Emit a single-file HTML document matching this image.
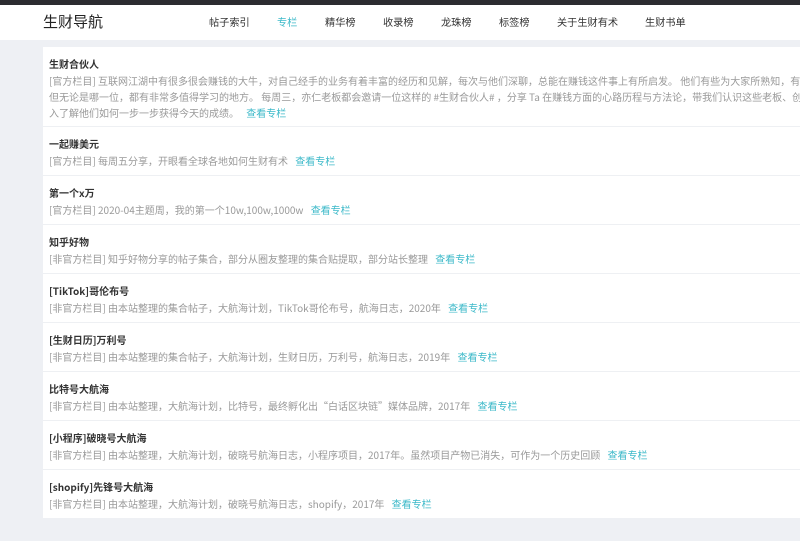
<!DOCTYPE html>
<html><head><meta charset="utf-8"><style>
*{margin:0;padding:0;box-sizing:border-box}
body{width:800px;height:541px;overflow:hidden;background:#eef0f4;font-family:"Noto Sans CJK SC","Liberation Sans",sans-serif;position:relative}
.top{position:absolute;left:0;top:0;width:800px;height:5px;background:#2c2c30}
.nav{position:absolute;left:0;top:5px;width:800px;height:35px;background:#fff}
.logo{position:absolute;left:43px;top:7px;font-size:15px;color:#222;line-height:20px}
.nav a{position:absolute;top:9px;font-size:10.2px;color:#333;line-height:16px;white-space:nowrap}
.nav a.on{color:#3cb9c9}
.card{position:absolute;left:43px;top:47px;width:757px;height:471px;background:#fff;overflow:hidden}
.it{height:49px;border-bottom:1px solid #eef0f3;padding:8px 6px 0;white-space:nowrap}
.it.first{height:80px}
.t{font-size:10px;font-weight:bold;color:#333;line-height:17px}
.d{font-size:10px;color:#999;line-height:16px;margin-top:1px}
.d a{color:#3cb9c9;margin-left:5px}
</style></head><body>
<div class="top"></div>
<div class="nav">
<div class="logo">生财导航</div>
<a style="left:209px">帖子索引</a>
<a class="on" style="left:277px">专栏</a>
<a style="left:325px">精华榜</a>
<a style="left:383px">收录榜</a>
<a style="left:441px">龙珠榜</a>
<a style="left:499px">标签榜</a>
<a style="left:557px">关于生财有术</a>
<a style="left:645px">生财书单</a>
</div>
<div class="card">
<div class="it first"><div class="t">生财合伙人</div><div class="d">[官方栏目] 互联网江湖中有很多很会赚钱的大牛，对自己经手的业务有着丰富的经历和见解，每次与他们深聊，总能在赚钱这件事上有所启发。 他们有些为大家所熟知，有些<br>但无论是哪一位，都有非常多值得学习的地方。 每周三，亦仁老板都会邀请一位这样的 #生财合伙人# ，分享 Ta 在赚钱方面的心路历程与方法论，带我们认识这些老板、创<br>入了解他们如何一步一步获得今天的成绩。 <a>查看专栏</a></div></div>
<div class="it"><div class="t">一起赚美元</div><div class="d">[官方栏目] 每周五分享，开眼看全球各地如何生财有术 <a>查看专栏</a></div></div>
<div class="it"><div class="t">第一个x万</div><div class="d">[官方栏目] 2020-04主题周，我的第一个10w,100w,1000w <a>查看专栏</a></div></div>
<div class="it"><div class="t">知乎好物</div><div class="d">[非官方栏目] 知乎好物分享的帖子集合，部分从圈友整理的集合贴提取，部分站长整理 <a>查看专栏</a></div></div>
<div class="it"><div class="t">[TikTok]哥伦布号</div><div class="d">[非官方栏目] 由本站整理的集合帖子，大航海计划，TikTok哥伦布号，航海日志，2020年 <a>查看专栏</a></div></div>
<div class="it"><div class="t">[生财日历]万利号</div><div class="d">[非官方栏目] 由本站整理的集合帖子，大航海计划，生财日历，万利号，航海日志，2019年 <a>查看专栏</a></div></div>
<div class="it"><div class="t">比特号大航海</div><div class="d">[非官方栏目] 由本站整理，大航海计划，比特号，最终孵化出“白话区块链”媒体品牌，2017年 <a>查看专栏</a></div></div>
<div class="it"><div class="t">[小程序]破晓号大航海</div><div class="d">[非官方栏目] 由本站整理，大航海计划，破晓号航海日志，小程序项目，2017年。虽然项目产物已消失，可作为一个历史回顾 <a>查看专栏</a></div></div>
<div class="it" style="border:0"><div class="t">[shopify]先锋号大航海</div><div class="d">[非官方栏目] 由本站整理，大航海计划，破晓号航海日志，shopify，2017年 <a>查看专栏</a></div></div>
</div>
</body></html>
